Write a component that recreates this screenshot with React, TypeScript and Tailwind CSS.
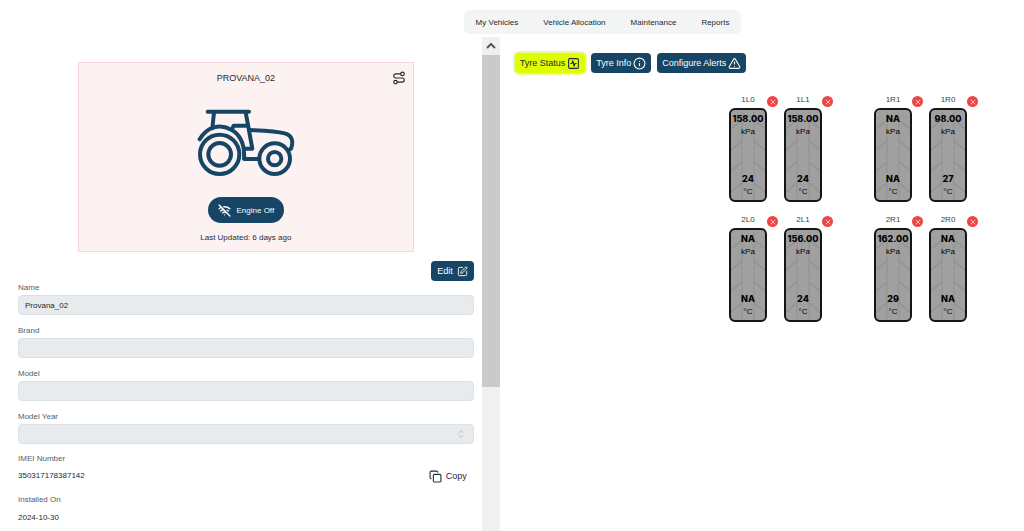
import React from "react";
import { ChevronsUpDown, Copy, Info, Route, SquareActivity, SquarePen, TriangleAlert, WifiOff, X } from "lucide-react";

const navItems = ["My Vehicles", "Vehicle Allocation", "Maintenance", "Reports"];

type Tyre = { id: string; pressure: string; temperature: string };

const axles: { left: Tyre[]; right: Tyre[] }[] = [
  {
    left: [
      { id: "1L0", pressure: "158.00", temperature: "24" },
      { id: "1L1", pressure: "158.00", temperature: "24" },
    ],
    right: [
      { id: "1R1", pressure: "NA", temperature: "NA" },
      { id: "1R0", pressure: "98.00", temperature: "27" },
    ],
  },
  {
    left: [
      { id: "2L0", pressure: "NA", temperature: "NA" },
      { id: "2L1", pressure: "156.00", temperature: "24" },
    ],
    right: [
      { id: "2R1", pressure: "162.00", temperature: "29" },
      { id: "2R0", pressure: "NA", temperature: "NA" },
    ],
  },
];

function Tractor() {
  return (
    <svg viewBox="0 0 294 207" className="h-[69px] w-[98px]" fill="none" stroke="#164565" strokeWidth="12" strokeLinecap="round" strokeLinejoin="round" aria-label="Tractor" role="img">
      <path d="M32 11H156" />
      <path d="M51 13L46 61M146 13L166 122H146" />
      <path d="M8 94C30 55 70 47 100 64C128 78 144 106 141 153H184" />
      <path d="M104 66L110 53H152" />
      <path d="M158 66C200 68 236 69 263 76C286 82 290 101 282 122L274 127" />
      <circle cx="68" cy="139" r="59" />
      <circle cx="68" cy="139" r="34" />
      <circle cx="233" cy="152" r="46" />
      <circle cx="233" cy="152" r="20" />
    </svg>
  );
}

function Tread() {
  return (
    <svg viewBox="0 0 34 90" preserveAspectRatio="none" className="absolute inset-0 h-full w-full" fill="none" stroke="#929292" aria-hidden="true">
      <path d="M11 0V90M23 0V90" />
      <path d="M0 19L11 10M0 40L11 31M0 61L11 52M0 82L11 73M23 10L34 19M23 31L34 40M23 52L34 61M23 73L34 82" strokeWidth="1.4" />
    </svg>
  );
}

function TyreCard({ tyre }: { tyre: Tyre }) {
  return (
    <div className="relative w-[38px] text-center">
      <div className="h-3 text-[8px] leading-3 text-slate-700">{tyre.id}</div>
      <button aria-label={`Remove tyre ${tyre.id}`} className="absolute top-0.5 -right-[11px] flex size-[11px] items-center justify-center rounded-full bg-[#ef4444] text-white">
        <X className="size-2" strokeWidth={2} />
      </button>
      <div className="relative mt-0.5 h-[94px] overflow-hidden rounded-md border-2 border-[#151515] bg-[#a0a0a0] text-black">
        <Tread />
        <div className="relative flex h-full flex-col items-center justify-between pt-px pb-[3px]">
          <div>
            <div className="font-['Inter',sans-serif] text-[9px] leading-4 font-extrabold">{tyre.pressure}</div>
            <div className="text-[8px] leading-[10px]">kPa</div>
          </div>
          <div>
            <div className="font-['Inter',sans-serif] text-[9px] leading-4 font-extrabold">{tyre.temperature}</div>
            <div className="text-[8px] leading-[10px]">°C</div>
          </div>
        </div>
      </div>
    </div>
  );
}

function Field({ id, label, value }: { id: string; label: string; value?: string }) {
  return (
    <div>
      <label htmlFor={id} className="block h-[15px] leading-[15px] text-[#555d66]">{label}</label>
      <input id={id} defaultValue={value} readOnly className="block h-5 w-full rounded-sm border border-[#dde1e4] bg-[#e8ebee] px-1.5 text-[#25282c]" />
    </div>
  );
}

export default function App() {
  return (
    <div className="flex min-h-screen flex-col bg-white font-['Liberation_Sans',Arial,sans-serif] text-[8px] text-[#222b38]">
      <header className="flex justify-center pt-2.5 pb-[3px] pl-[181px]">
        <nav className="flex h-6 items-center gap-[25px] rounded-md bg-[#f3f4f4] px-3">
          {navItems.map((item) => (
            <a key={item} href="#" className="pt-px whitespace-nowrap">{item}</a>
          ))}
        </nav>
      </header>
      <main className="flex flex-1">
        <section className="flex w-[48.8%] shrink-0">
          <div className="min-w-0 flex-1 pt-[25px] pr-2 pl-[18px]">
            <article className="relative mx-auto flex h-[190px] max-w-[336px] flex-col items-center border border-[#fbd5d5] bg-[#fdf2f2]">
              <h1 className="mt-2 text-[9px] leading-[14px]">PROVANA_02</h1>
              <button aria-label="Route" className="absolute top-2 right-[7px]">
                <Route className="size-3.5" strokeWidth={2} />
              </button>
              <div className="mt-[23px]"><Tractor /></div>
              <button className="mt-5 flex h-[26px] items-center gap-1.5 rounded-full bg-[#164565] px-2.5 text-white">
                <WifiOff className="size-[13px]" strokeWidth={2.5} />
                <span className="pt-px">Engine Off</span>
              </button>
              <p className="mt-2 leading-[14px]">Last Updated: 6 days ago</p>
            </article>
            <div className="mt-[9px] flex justify-end">
              <button className="flex h-5 items-center gap-1 rounded-sm bg-[#164565] px-1.5 text-[9px] text-white">
                <span className="pt-px">Edit</span>
                <SquarePen className="size-[11px]" />
              </button>
            </div>
            <form className="-mt-px flex flex-col gap-2">
              <Field id="name" label="Name" value="Provana_02" />
              <Field id="brand" label="Brand" />
              <Field id="model" label="Model" />
              <div>
                <label htmlFor="year" className="block h-[15px] leading-[15px] text-[#555d66]">Model Year</label>
                <div className="relative">
                  <select id="year" disabled className="block h-5 w-full appearance-none rounded-sm border border-[#dde1e4] bg-[#e8ebee] px-1.5">
                    <option value=""></option>
                  </select>
                  <ChevronsUpDown className="pointer-events-none absolute top-[5px] right-2 size-2.5 text-[#aeb4ba]" />
                </div>
              </div>
            </form>
            <dl className="mt-[7px]">
              <dt className="leading-[15px] text-[#555d66]">IMEI Number</dt>
              <dd className="flex h-5 items-center justify-between">
                350317178387142
                <button className="mr-[7px] flex items-center gap-1 text-[9px]">
                  <Copy className="size-[13px]" strokeWidth={2} />
                  <span className="pt-px">Copy</span>
                </button>
              </dd>
              <dt className="mt-1.5 leading-[15px] text-[#555d66]">Installed On</dt>
              <dd className="h-5 pt-px leading-5">2024-10-30</dd>
            </dl>
          </div>
          <div className="flex w-[18px] shrink-0 flex-col bg-[#f0f0f0]">
            <button aria-label="Scroll up" className="flex h-[18px] items-center justify-center">
              <svg viewBox="0 0 10 6" className="h-1.5 w-2.5" fill="none" stroke="#555" strokeWidth="2"><path d="M1 5L5 1L9 5" /></svg>
            </button>
            <div className="h-[332px] bg-[#cacaca]" />
          </div>
        </section>
        <section className="min-w-0 flex-1 pt-4">
          <div className="flex gap-1.5 pl-[15px] text-[9px]">
            <button className="flex h-5 items-center gap-0.5 rounded-sm bg-[#dfff00] px-[5px] text-[#222b38] ring-2 ring-[#e9fb9a]">
              <span className="pt-px">Tyre Status</span> <SquareActivity className="size-[13px]" />
            </button>
            <button className="flex h-5 items-center gap-0.5 rounded-sm bg-[#164565] px-[5px] text-white">
              <span className="pt-px">Tyre Info</span> <Info className="size-[13px]" strokeWidth={2} />
            </button>
            <button className="flex h-5 items-center gap-0.5 rounded-sm bg-[#164565] px-[5px] text-white">
              <span className="pt-px">Configure Alerts</span> <TriangleAlert className="size-[13px]" strokeWidth={2} />
            </button>
          </div>
          <div className="mt-[21px] flex flex-col items-end gap-3 pr-[57px]">
            {axles.map((axle, index) => (
              <div key={index} className="flex gap-[52px]">
                <div className="flex gap-[17px]">{axle.left.map((tyre) => <TyreCard key={tyre.id} tyre={tyre} />)}</div>
                <div className="flex gap-[17px]">{axle.right.map((tyre) => <TyreCard key={tyre.id} tyre={tyre} />)}</div>
              </div>
            ))}
          </div>
        </section>
      </main>
    </div>
  );
}
